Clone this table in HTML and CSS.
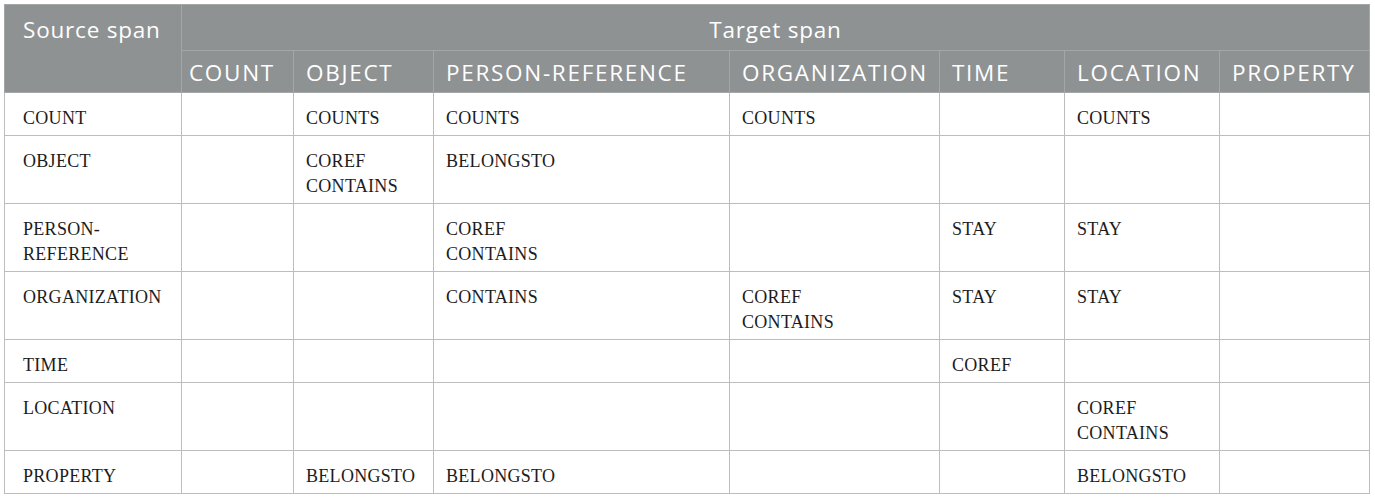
FILE: index.html
```html
<!DOCTYPE html>
<html lang="en">
<head>
<meta charset="utf-8">
<title>Source span / Target span</title>
<link rel="stylesheet" href="styles.css">
</head>
<body>
<table class="rel-table">
  <colgroup>
    <col class="c1"><col class="c2"><col class="c3"><col class="c4"><col class="c5"><col class="c6"><col class="c7"><col class="c8">
  </colgroup>
  <thead>
    <tr class="h1">
      <th rowspan="2" class="src">Source span</th>
      <th colspan="7" class="tgt">Target span</th>
    </tr>
    <tr class="h2">
      <th class="narrow">COUNT</th>
      <th>OBJECT</th>
      <th>PERSON-REFERENCE</th>
      <th>ORGANIZATION</th>
      <th>TIME</th>
      <th>LOCATION</th>
      <th>PROPERTY</th>
    </tr>
  </thead>
  <tbody>
    <tr>
      <td>COUNT</td><td></td><td>COUNTS</td><td>COUNTS</td><td>COUNTS</td><td></td><td>COUNTS</td><td></td>
    </tr>
    <tr>
      <td>OBJECT</td><td></td><td>COREF<br>CONTAINS</td><td>BELONGSTO</td><td></td><td></td><td></td><td></td>
    </tr>
    <tr>
      <td>PERSON-<br>REFERENCE</td><td></td><td></td><td>COREF<br>CONTAINS</td><td></td><td>STAY</td><td>STAY</td><td></td>
    </tr>
    <tr>
      <td>ORGANIZATION</td><td></td><td></td><td>CONTAINS</td><td>COREF<br>CONTAINS</td><td>STAY</td><td>STAY</td><td></td>
    </tr>
    <tr>
      <td>TIME</td><td></td><td></td><td></td><td></td><td>COREF</td><td></td><td></td>
    </tr>
    <tr>
      <td>LOCATION</td><td></td><td></td><td></td><td></td><td></td><td>COREF<br>CONTAINS</td><td></td>
    </tr>
    <tr>
      <td>PROPERTY</td><td></td><td>BELONGSTO</td><td>BELONGSTO</td><td></td><td></td><td>BELONGSTO</td><td></td>
    </tr>
  </tbody>
</table>
</body>
</html>
```

FILE: styles.css
```css
html, body {
  background: #ffffff;
}
body {
  margin: 4px;
}
.rel-table {
  width: 1365px;
  table-layout: fixed;
  border-collapse: collapse;
  border: 1px solid #bcc3bc;
}
.c1 { width: 177px; }
.c2 { width: 112px; }
.c3 { width: 140px; }
.c4 { width: 296px; }
.c5 { width: 210px; }
.c6 { width: 125px; }
.c7 { width: 155px; }
.c8 { width: 150px; }

.rel-table th {
  background: #8e9293;
  color: #ffffff;
  font-family: "Open Sans", "Noto Sans", sans-serif;
  font-weight: 400;
  font-size: 22.5px;
  line-height: 28px;
  text-align: left;
  white-space: nowrap;
  overflow: visible;
  border: 1px solid #a3a7a7;
  letter-spacing: 1.7px;
}
.rel-table .h1 th {
  padding: 11px 12px 6px 12px;
  letter-spacing: 0.8px;
}
.rel-table .h1 th.src {
  vertical-align: top;
  padding-left: 18px;
}
.rel-table .h1 th.tgt {
  text-align: center;
}
.rel-table .h2 th {
  padding: 8px 12px 5px 12px;
}
.rel-table .h2 th.narrow {
  padding-left: 7px;
  padding-right: 0;
}

.rel-table td {
  font-family: "Liberation Serif", "Times New Roman", serif;
  font-size: 18px;
  line-height: 25px;
  letter-spacing: 0.3px;
  color: #1c1c1c;
  vertical-align: top;
  padding: 13px 12px 4px 12px;
  border: 1px solid #bdbdbd;
}
.rel-table td:first-child {
  padding-left: 18px;
}
```
